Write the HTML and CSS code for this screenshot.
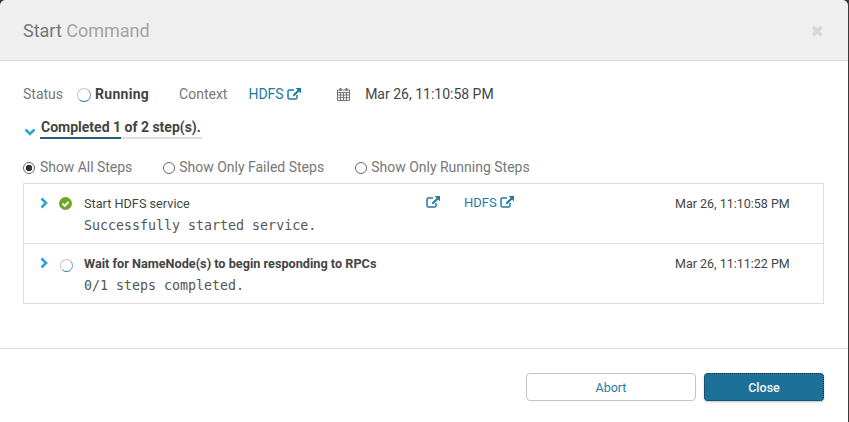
FILE: index.html
```html
<!DOCTYPE html>
<html lang="en">
<head>
    <meta charset="UTF-8">
    <meta name="viewport" content="width=device-width, initial-scale=1.0">
    <title>Start Command</title>
    <link rel="stylesheet" href="styles.css">
</head>
<body>
    <svg class="icon-defs" width="0" height="0" aria-hidden="true">
        <symbol id="ext" viewBox="0 0 14 12">
            <path d="M10 7v2.6A1.4 1.4 0 0 1 8.6 11H2.4A1.4 1.4 0 0 1 1 9.6V3.4A1.4 1.4 0 0 1 2.4 2H7" fill="none" stroke="currentColor" stroke-width="1.5"/>
            <path d="M8.6 0H14v5.4l-1.9-1.9L7 8.4 5.6 7l5-5z" fill="currentColor"/>
        </symbol>
        <symbol id="chev" viewBox="0 0 8 12">
            <path d="M1.5 1.5 6 6l-4.500 4.500" fill="none" stroke="currentColor" stroke-width="2.600"/>
        </symbol>
    </svg>

    <div class="modal">
        <div class="modal-header">
            <h3 class="title"><span class="title-dark">Start</span> Command</h3>
            <span class="close-x">&#10006;</span>
        </div>

        <div class="modal-body">
            <div class="status-row">
                <span class="label status-label">Status</span>
                <span class="spinner"></span>
                <strong class="running">Running</strong>
                <span class="label context-label">Context</span>
                <a class="link context-link">HDFS <svg class="ext"><use href="#ext"/></svg></a>
                <svg class="calendar" viewBox="0 0 13 14">
                    <path d="M.5 3h12v10.500H.5zM.5 5.500h12M.5 8h12M.5 10.700h12M3.500 5.500v8M6.500 5.500v8M9.500 5.500v8" fill="none" stroke="#777" stroke-width="1"/>
                    <path d="M2.500 1h2v3h-2zM8.500 1h2v3h-2z" fill="#777"/>
                </svg>
                <span class="date">Mar 26, 11:10:58 PM</span>
            </div>

            <div class="progress-row">
                <svg class="chev-down" viewBox="0 0 12 8"><path d="M1.500 1.500 6 6l4.500-4.500" fill="none" stroke="currentColor" stroke-width="2.600"/></svg>
                <div class="progress-title">Completed 1 of 2 step(s).</div>
            </div>

            <div class="filters">
                <label class="filter"><span class="radio checked"></span>Show All Steps</label>
                <label class="filter"><span class="radio"></span>Show Only Failed Steps</label>
                <label class="filter"><span class="radio"></span>Show Only Running Steps</label>
            </div>

            <div class="steps">
                <div class="step">
                    <svg class="chev"><use href="#chev"/></svg>
                    <svg class="ok" viewBox="0 0 13 13">
                        <circle cx="6.500" cy="6.500" r="6.500" fill="#6fa828"/>
                        <path d="M3.500 6.600 5.700 8.800 9.600 4.800" fill="none" stroke="#fff" stroke-width="1.900"/>
                    </svg>
                    <div class="step-text">
                        <div class="step-name">Start HDFS service</div>
                        <div class="step-msg">Successfully started service.</div>
                    </div>
                    <a class="link step-ext"><svg class="ext"><use href="#ext"/></svg></a>
                    <a class="link step-context">HDFS <svg class="ext"><use href="#ext"/></svg></a>
                    <div class="step-date">Mar 26, 11:10:58 PM</div>
                </div>
                <div class="step">
                    <svg class="chev"><use href="#chev"/></svg>
                    <span class="spinner small"></span>
                    <div class="step-text">
                        <div class="step-name bold">Wait for NameNode(s) to begin responding to RPCs</div>
                        <div class="step-msg">0/1 steps completed.</div>
                    </div>
                    <div class="step-date">Mar 26, 11:11:22 PM</div>
                </div>
            </div>
        </div>

        <div class="modal-footer">
            <button class="btn btn-abort">Abort</button>
            <button class="btn btn-close">Close</button>
        </div>
    </div>
</body>
</html>
```

FILE: styles.css
```css
html, body {
    height: 100%;
}

body {
    margin: 0;
    background: #3a3a3a;
    font-family: Roboto, Arial, sans-serif;
    color: #444;
    overflow: hidden;
}

.icon-defs {
    display: block;
    height: 0;
}

.modal {
    width: 848px;
    height: 422px;
    background: #fff;
    border-radius: 6px 6px 0 0;
    display: flex;
    flex-direction: column;
}

.modal-header {
    height: 61px;
    box-sizing: border-box;
    background: #f0eff0;
    border-bottom: 1px solid #dcdcdc;
    border-radius: 6px 6px 0 0;
    display: flex;
    align-items: center;
    justify-content: space-between;
    padding: 0 24px 0 23px;
}

.title {
    margin: 0;
    font-size: 18px;
    font-weight: 400;
    color: #a3a3a3;
}

.title-dark {
    color: #777;
}

.close-x {
    color: #d6d6d6;
    font-size: 16px;
    font-family: "DejaVu Sans", sans-serif;
    margin-top: 3px;
}

.modal-body {
    flex: 1;
    padding: 0 24px 0 23px;
    font-size: 14px;
}

.status-row {
    display: flex;
    align-items: center;
    height: 20px;
    margin-top: 23px;
}

.label {
    color: #777;
}

.spinner {
    width: 12px;
    height: 12px;
    border-radius: 50%;
    border: 1px solid #c4c4c4;
    border-bottom-color: #2d7ea5;
    border-right-color: #6aa3bf;
    margin: 2px 0 0 14px;
}

.running {
    font-weight: 700;
    color: #444;
    margin-left: 4px;
    letter-spacing: 0.02em;
}

.context-label {
    margin-left: 30px;
}

.link {
    color: #1f7ba3;
}

.context-link {
    margin-left: 21px;
}

.ext {
    width: 14px;
    height: 12px;
    vertical-align: -1px;
}

.calendar {
    width: 13px;
    height: 14px;
    margin-left: 36px;
}

.date {
    margin-left: 15px;
    color: #444;
}

.progress-row {
    display: flex;
    align-items: flex-start;
    margin-top: 15px;
}

.chev-down {
    width: 12px;
    height: 8px;
    margin: 9px 0 0 1px;
    color: #2ea3d2;
}

.progress-title {
    margin-left: 4px;
    padding-left: 1px;
    box-sizing: border-box;
    font-weight: 700;
    color: #444;
    height: 20px;
    line-height: 17px;
    border-bottom: 2px solid #ddd;
    width: 162px;
    position: relative;
}

.progress-title::after {
    content: "";
    position: absolute;
    left: 0;
    bottom: -2px;
    width: 81px;
    height: 2px;
    background: #275f7a;
}

.filters {
    display: flex;
    margin-top: 18px;
    height: 20px;
    align-items: center;
    color: #777;
}

.filter {
    display: flex;
    align-items: center;
    margin-right: 31px;
}

.filter:first-child {
    letter-spacing: -0.05px;
}

.radio {
    width: 10px;
    height: 10px;
    border: 1px solid #666;
    border-radius: 50%;
    margin-right: 4px;
    margin-top: 1px;
    background: #fff;
}

.radio.checked {
    margin-right: 5px;
    background: radial-gradient(circle, #333 0, #333 3px, #fff 3.600px);
}

.steps {
    border: 1px solid #ddd;
    margin-top: 6px;
}

.step {
    display: flex;
    height: 60px;
    box-sizing: border-box;
    position: relative;
    font-size: 12.500px;
}

.step:first-child {
    height: 59px;
}

.step + .step {
    border-top: 1px solid #ddd;
}

.chev {
    width: 8px;
    height: 12px;
    margin: 13px 0 0 16px;
    color: #2ea3d2;
}

.ok {
    width: 13px;
    height: 13px;
    margin: 13px 0 0 11px;
}

.spinner.small {
    margin: 15px -1px 0 12px;
    width: 11px;
    height: 11px;
}

.step-text {
    margin: 11px 0 0 12px;
    width: 342px;
}

.step-name {
    color: #444;
    font-size: 12.700px;
    line-height: 18px;
    white-space: nowrap;
}

.step-name.bold {
    font-weight: 700;
}

.step-msg {
    font-family: "DejaVu Sans Mono", monospace;
    font-size: 13.300px;
    color: #555;
    line-height: 20px;
    margin-top: 3px;
    white-space: nowrap;
}

.step-ext {
    margin: 11px 0 0 0;
}

.step-context {
    margin: 11px 0 0 24px;
    font-size: 13px;
}

.step-date {
    position: absolute;
    left: 651px;
    top: 11px;
    line-height: 18px;
}

.modal-footer {
    height: 74px;
    border-top: 1px solid #dcdcdc;
    display: flex;
    justify-content: flex-end;
    padding: 24px 24px 0 0;
    box-sizing: border-box;
    gap: 8px;
}

.btn {
    height: 28px;
    border-radius: 4px;
    font-family: Roboto, Arial, sans-serif;
    font-size: 12.500px;
    padding: 0;
}

.btn-abort {
    width: 170px;
    background: #fff;
    border: 1px solid #c4c4c4;
    color: #1f7ba3;
}

.btn-close {
    width: 120px;
    background: #1d7198;
    border: 1px solid #1d7198;
    outline: 1px dotted #10364a;
    outline-offset: -1px;
    color: #f2f7fa;
    font-weight: 500;
    box-shadow: 0 1px 2px rgba(0, 0, 0, 0.25);
}
```
